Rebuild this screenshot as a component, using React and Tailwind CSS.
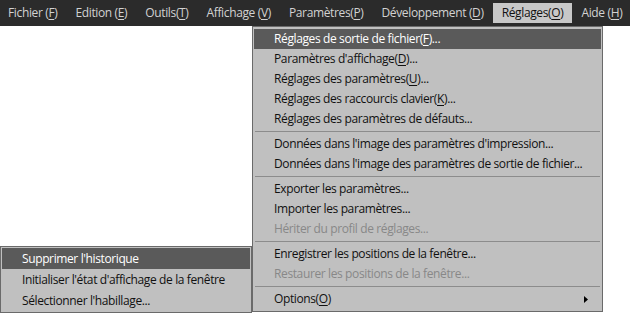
import React from "react";

const font = { fontFamily: "'Open Sans', 'Noto Sans', sans-serif" };

const topMenu = [
  ["Fichier (", "F", ")"],
  ["Edition (", "E", ")"],
  ["Outils(", "T", ")"],
  ["Affichage (", "V", ")"],
  ["Paramètres(", "P", ")"],
  ["Développement (", "D", ")"],
  ["Réglages(", "O", ")", true],
  ["Aide (", "H", ")"],
];

function Label({ parts }) {
  if (typeof parts === "string") return <span>{parts}</span>;
  return (
    <span>
      {parts[0]}
      <u className="underline-offset-2">{parts[1]}</u>
      {parts[2]}
    </span>
  );
}

const mainItems = [
  { label: ["Réglages de sortie de fichier(", "F", ")..."], active: true },
  { label: ["Paramètres d'affichage(", "D", ")..."] },
  { label: ["Réglages des paramètres(", "U", ")..."] },
  { label: ["Réglages des raccourcis clavier(", "K", ")..."] },
  { label: "Réglages des paramètres de défauts..." },
  { sep: true },
  { label: "Données dans l'image des paramètres d'impression..." },
  { label: "Données dans l'image des paramètres de sortie de fichier..." },
  { sep: true },
  { label: "Exporter les paramètres..." },
  { label: "Importer les paramètres..." },
  { label: "Hériter du profil de réglages...", disabled: true },
  { sep: true },
  { label: "Enregistrer les positions de la fenêtre..." },
  { label: "Restaurer les positions de la fenêtre...", disabled: true },
  { sep: true },
  { label: ["Options(", "O", ")"], sub: true },
];

const subItems = [
  { label: "Supprimer l'historique", active: true },
  { label: "Initialiser l'état d'affichage de la fenêtre" },
  { label: "Sélectionner l'habillage..." },
];

function MenuRow({ item, h }) {
  if (item.sep) {
    return (
      <div className="h-[5px] flex items-center px-[1px]">
        <div className="h-[1px] w-full bg-[#8c8c8c]" />
      </div>
    );
  }
  let cls = "text-[#111]";
  if (item.active) cls = "bg-[#5a5a5a] text-white";
  if (item.disabled) cls = "text-[#888]";
  return (
    <div className={`${h} flex items-center pl-[20px] pr-[12px] ${cls}`}>
      <div className="flex-1 whitespace-nowrap">
        <Label parts={item.label} />
      </div>
      {item.sub && (
        <svg width="4" height="7" viewBox="0 0 4 7" className="mr-[1px]">
          <path d="M0 0 L4 3.5 L0 7 Z" fill="#000" />
        </svg>
      )}
    </div>
  );
}

export default function App() {
  return (
    <div
      className="relative w-[630px] h-[313px] bg-white overflow-hidden text-[12px] leading-none tracking-[-0.38px]"
      style={font}
    >
      {/* menu bar */}
      <div className="h-[26px] bg-[#2b2b2b] flex items-center tracking-[-0.36px]">
        {topMenu.map((m, i) => (
          <div
            key={i}
            className={`h-[20px] flex items-center whitespace-nowrap ${i === 0 ? "pl-[8px] pr-[9px]" : "px-[9px]"} ${
              m[3] ? "bg-[#c8c8c8] text-[#111]" : "text-[#d2d2d2]"
            }`}
          >
            <Label parts={m} />
          </div>
        ))}
      </div>

      {/* Réglages dropdown */}
      <div className="absolute left-[252px] top-[26px] w-[351px] bg-[#c0c0c0] border border-[#6a6a6a] py-[2px] px-[1px]">
        {mainItems.map((it, i) => (
          <MenuRow key={i} item={it} h="h-[20px]" />
        ))}
      </div>

      {/* Options submenu */}
      <div className="absolute left-0 top-[246px] w-[252px] bg-[#c0c0c0] border border-[#6a6a6a] py-[1px] px-[1px]">
        {subItems.map((it, i) => (
          <MenuRow key={i} item={it} h="h-[21px]" />
        ))}
      </div>
    </div>
  );
}
